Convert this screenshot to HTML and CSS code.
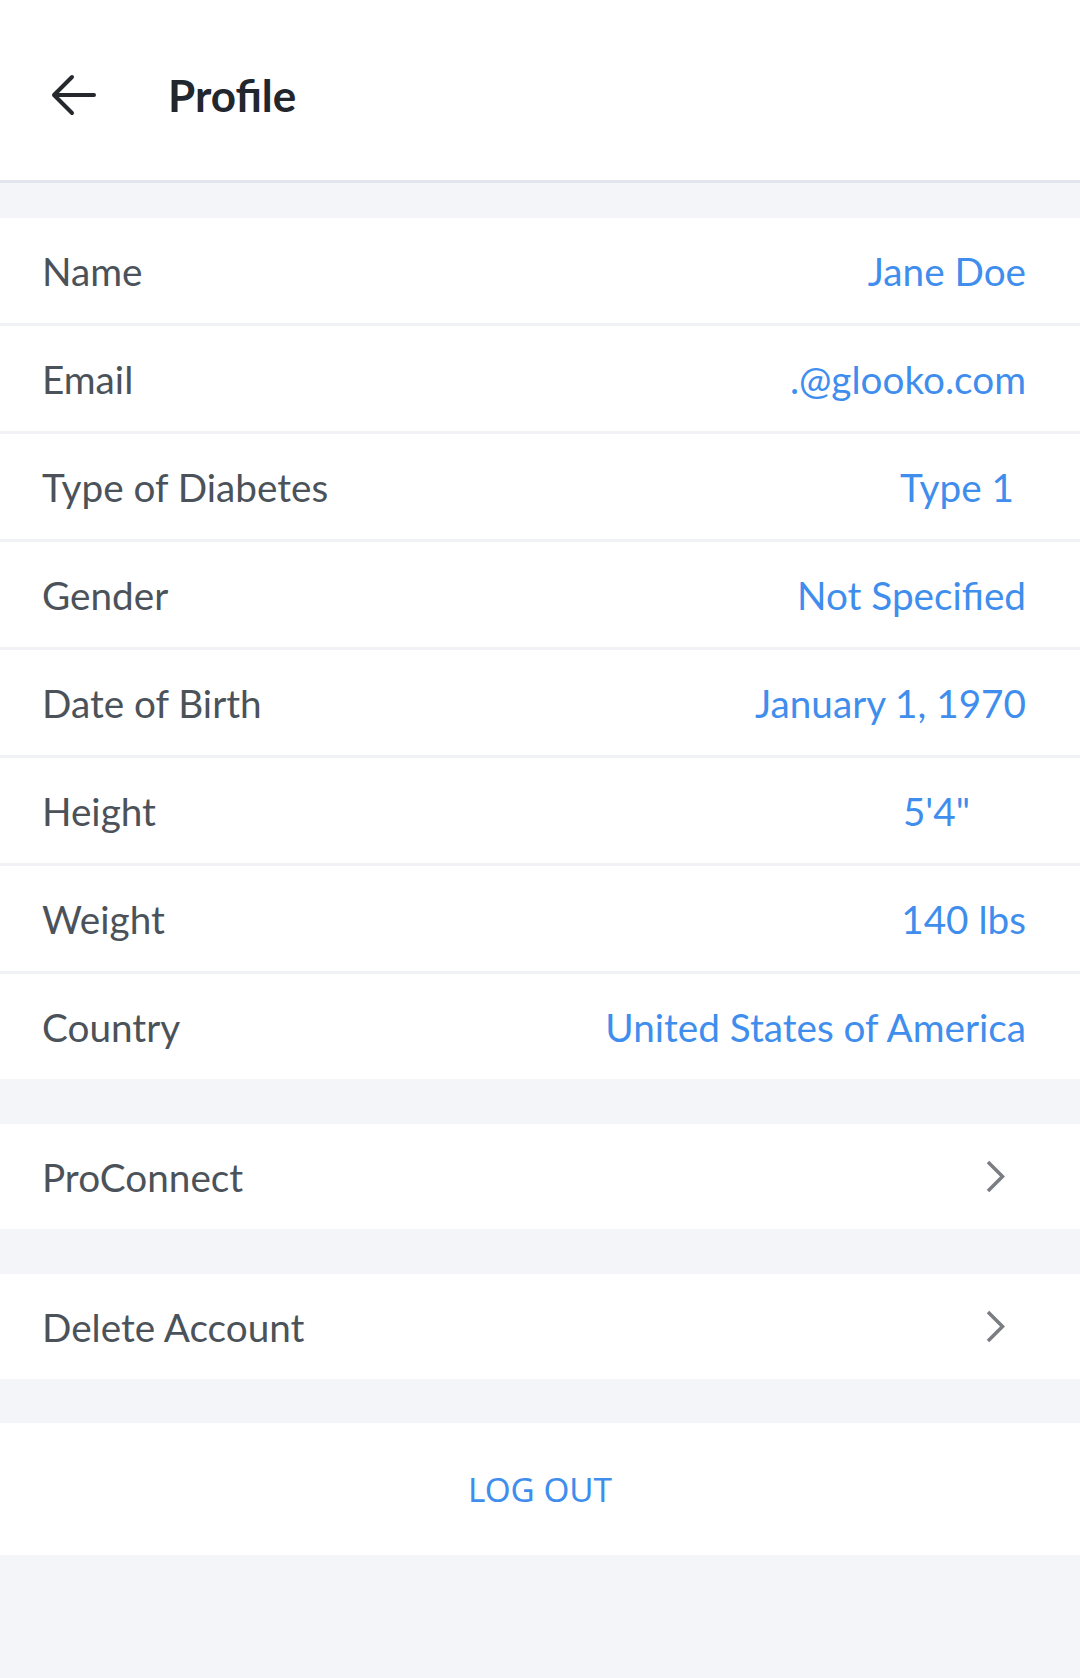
FILE: index.html
```html
<!DOCTYPE html>
<html lang="en">

<head>
    <meta charset="UTF-8">
    <meta name="viewport" content="width=device-width, initial-scale=1.0">
    <title>Profile</title>
    <link rel="stylesheet" href="styles.css">
</head>

<body>
    <header class="topBar">
        <a class="backButton" href="#">
            <svg width="46" height="42" viewBox="0 0 46 42">
                <path d="M43 21 H4 M21 3 L3 21 L21 39" fill="none" stroke="#25292e" stroke-width="4"
                    stroke-linecap="round" stroke-linejoin="round" />
            </svg>
        </a>
        <h1 class="pageTitle">Profile</h1>
    </header>

    <div class="spacer first"></div>

    <div class="infoList">
        <div class="infoRow">
            <span class="label">Name</span>
            <span class="value">Jane Doe</span>
        </div>
        <div class="infoRow">
            <span class="label">Email</span>
            <span class="value">.@glooko.com</span>
        </div>
        <div class="infoRow">
            <span class="label">Type of Diabetes</span>
            <span class="value shiftSmall">Type 1</span>
        </div>
        <div class="infoRow">
            <span class="label">Gender</span>
            <span class="value">Not Specified</span>
        </div>
        <div class="infoRow">
            <span class="label">Date of Birth</span>
            <span class="value">January 1, 1970</span>
        </div>
        <div class="infoRow">
            <span class="label">Height</span>
            <span class="value shiftLarge">5'4"</span>
        </div>
        <div class="infoRow">
            <span class="label">Weight</span>
            <span class="value">140 lbs</span>
        </div>
        <div class="infoRow">
            <span class="label">Country</span>
            <span class="value">United States of America</span>
        </div>
    </div>

    <div class="spacer"></div>

    <a class="linkRow" href="#">
        <span class="label">ProConnect</span>
        <svg class="chevron" width="21" height="35" viewBox="0 0 21 35">
            <path d="M3 3 L17.5 17.5 L3 32" fill="none" stroke="#7a7d81" stroke-width="3.5" />
        </svg>
    </a>

    <div class="spacer"></div>

    <a class="linkRow" href="#">
        <span class="label">Delete Account</span>
        <svg class="chevron" width="21" height="35" viewBox="0 0 21 35">
            <path d="M3 3 L17.5 17.5 L3 32" fill="none" stroke="#7a7d81" stroke-width="3.5" />
        </svg>
    </a>

    <div class="spacer"></div>

    <button class="logoutButton" type="button">LOG OUT</button>
</body>

</html>
```

FILE: styles.css
```css
body {
    margin: 0;
    background: #f4f5f9;
    font-family: "Lato", "Noto Sans", sans-serif;
}

.topBar {
    display: flex;
    align-items: center;
    box-sizing: border-box;
    height: 183px;
    padding-top: 10px;
    background: #ffffff;
    border-bottom: 3px solid #e1e5ed;
}

.backButton {
    display: flex;
    margin-left: 51px;
}

.pageTitle {
    margin: 0 0 0 71px;
    font-size: 44px;
    font-weight: 700;
    color: #22272d;
}

.spacer {
    height: 45px;
}

.spacer.first {
    height: 35px;
}

.infoList {
    background: #ffffff;
}

.infoRow {
    display: flex;
    justify-content: space-between;
    align-items: center;
    height: 105px;
    padding: 0 54px 0 42px;
}

.infoRow + .infoRow {
    border-top: 3px solid #f1f2f6;
}

.label {
    font-size: 38.7px;
    color: #4b5259;
}

.value {
    font-size: 38.7px;
    color: #3f8eed;
    white-space: nowrap;
}

.shiftSmall {
    margin-right: 12px;
}

.shiftLarge {
    margin-right: 56px;
}

.linkRow {
    display: flex;
    justify-content: space-between;
    align-items: center;
    height: 105px;
    padding: 0 74px 0 42px;
    background: #ffffff;
    text-decoration: none;
}

.logoutButton {
    display: block;
    width: 100%;
    height: 132px;
    margin-top: -1px;
    border: none;
    background: #ffffff;
    font-family: "Noto Sans", sans-serif;
    font-size: 33.2px;
    color: #3f8eed;
    cursor: pointer;
}
```
